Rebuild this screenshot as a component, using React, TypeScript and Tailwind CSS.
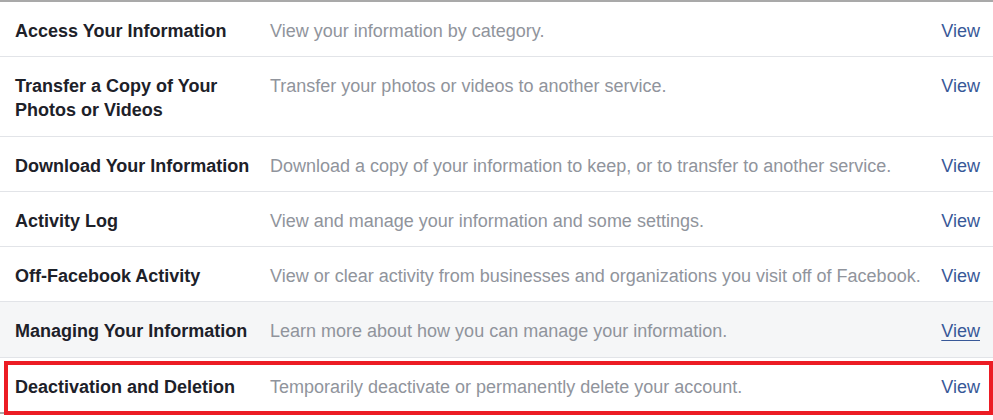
import React from "react";

type Row = { label: string[]; desc: string; shaded?: boolean; underline?: boolean };

const rows: Row[] = [
  { label: ["Access Your Information"], desc: "View your information by category." },
  { label: ["Transfer a Copy of Your", "Photos or Videos"], desc: "Transfer your photos or videos to another service." },
  { label: ["Download Your Information"], desc: "Download a copy of your information to keep, or to transfer to another service." },
  { label: ["Activity Log"], desc: "View and manage your information and some settings." },
  { label: ["Off-Facebook Activity"], desc: "View or clear activity from businesses and organizations you visit off of Facebook." },
  { label: ["Managing Your Information"], desc: "Learn more about how you can manage your information.", shaded: true, underline: true },
  { label: ["Deactivation and Deletion"], desc: "Temporarily deactivate or permanently delete your account." },
];

export default function App() {
  return (
    <div
      className="relative w-[993px] h-[420px] bg-white overflow-hidden"
      style={{ fontFamily: '"Liberation Sans", Arial, sans-serif' }}
    >
      <div className="border-t-2 border-b-2 border-[#a9a9a9]">
        {rows.map((r, i) => (
          <div
            key={i}
            className={`flex items-start pl-[15px] pr-[13px] pt-[18px] pb-[14.25px] text-[18px] leading-[22px] ${
              i < rows.length - 1 ? "border-b border-[#e2e4e8]" : ""
            } ${r.shaded ? "bg-[#f5f6f7]" : "bg-white"}`}
          >
            <div className="w-[248px] shrink-0 font-bold text-[#1d2129] leading-[24px] -my-[1px]">
              {r.label.map((l, j) => (
                <div key={j}>{l}</div>
              ))}
            </div>
            <div className="ml-[7px] flex-1 text-[#90949c]">{r.desc}</div>
            <a className={`ml-4 text-[#385898] ${r.underline ? "underline underline-offset-[3px]" : ""}`}>View</a>
          </div>
        ))}
      </div>
      <div className="absolute left-[4px] top-[361px] w-[989px] h-[54px] border-[4px] border-[#ec1c24]" />
    </div>
  );
}
